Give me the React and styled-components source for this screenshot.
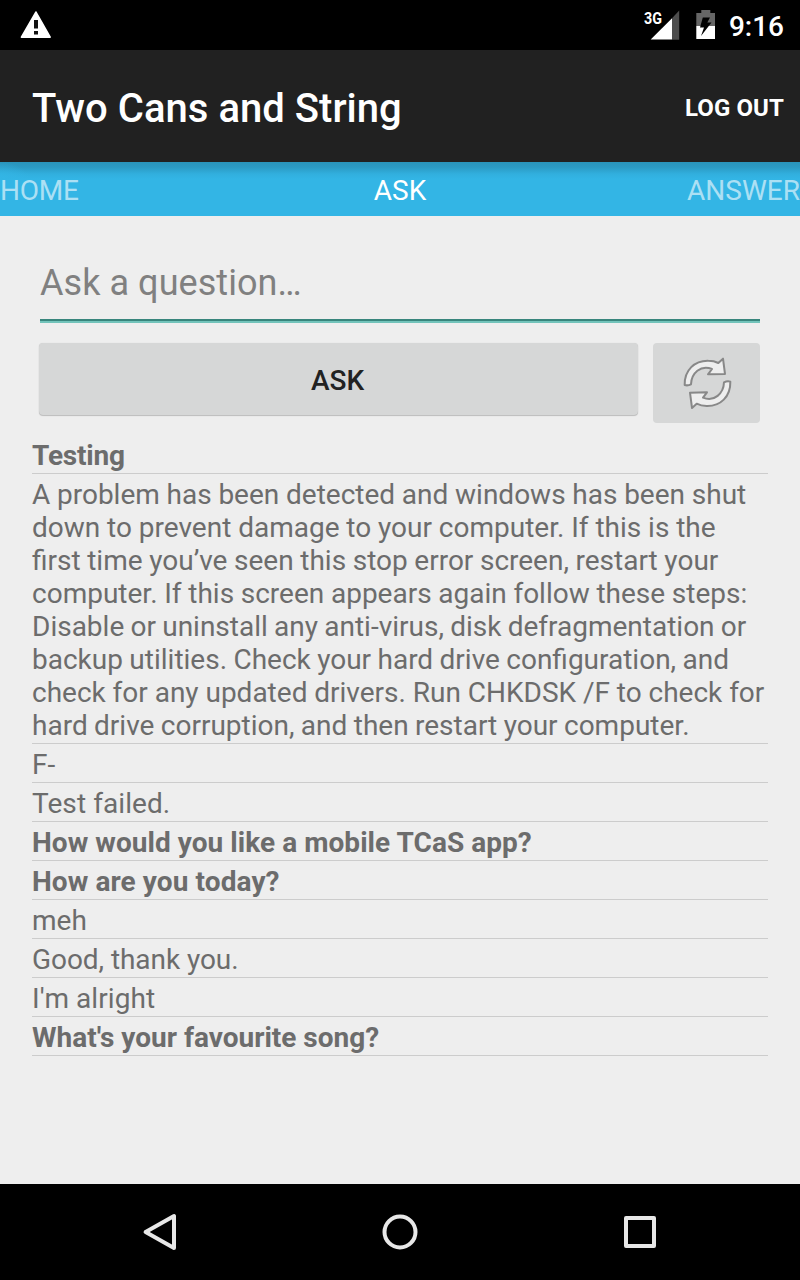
import React from 'react';
import styled, { createGlobalStyle } from 'styled-components';

const Global = createGlobalStyle`
  body { margin: 0; background: #eee; font-family: Roboto, sans-serif; }
  * { box-sizing: border-box; }
  svg { display: block; }
`;
const Screen = styled.div`width: 800px; height: 1280px; display: flex; flex-direction: column; background: #eee;`;
const StatusBar = styled.div`height: 50px; background: #000; display: flex; align-items: center; justify-content: space-between; padding: 0 16px 0 20px;`;
const Right = styled.div`display: flex; align-items: center;`;
const Clock = styled.span`color: #fff; font-size: 28px; font-weight: 500; line-height: 48px; margin-left: 13px; padding-top: 4px;`;
const AppBar = styled.header`height: 112px; background: #212121; color: #fff; display: flex; align-items: center; justify-content: space-between; padding: 4px 16px 0 32px;`;
const Title = styled.h1`margin: 0; font-size: 40px; font-weight: 500; white-space: nowrap; letter-spacing: 0.03px;`;
const LogOut = styled.button`border: 0; background: none; padding: 0; margin-top: -1px; color: #fff; font: 700 24px Roboto, sans-serif; letter-spacing: 0.1px;`;
const Tabs = styled.nav`
  height: 54px; display: grid; grid-template-columns: 1fr auto 1fr; align-items: center; padding-top: 2px;
  background:
    radial-gradient(ellipse 30px 18px at 0 100%, #33b5e5 0%, #33b5e500 100%) 0 0 / 30px 18px no-repeat,
    linear-gradient(#2a94bb 0, #2b9ac3 5px, #31afde 12px, #33b5e5 17px);
`;
const Tab = styled.span`font-size: 28px; letter-spacing: -0.25px; color: rgba(255,255,255,.6); &:last-child { text-align: right; letter-spacing: 0.03px; }
  ${p => p.$active && 'color: #fff; letter-spacing: 0;'}`;
const Content = styled.main`flex: 1; padding: 0 32px;`;
const Field = styled.div`margin: 32px 8px 0; height: 75px; border-bottom: 2px solid #72c3ba; box-shadow: inset 0 -2px #38857c; font-size: 36px; line-height: 71px; color: #808080; letter-spacing: 0.06px;`;
const Actions = styled.div`display: flex; gap: 15px; padding: 20px 8px 0 7px; height: 112px;`;
const AskButton = styled.button`border: 0; padding: 2px 2px 0 0; width: 599px; height: 72px; border-radius: 4px; background: #d6d7d7; box-shadow: 0 1px 1px #0003, 0 0 1px #0002; font: 500 28px Roboto, sans-serif; color: #222;`;
const Refresh = styled.button`border: 0; padding: 0; width: 107px; height: 80px; border-radius: 4px; background: #d6d7d7;`;
const Row = styled.div`
  border-bottom: 1px solid #ccc; padding: 4px 0 1px; font-size: 28px; line-height: 33px; color: #6c6c6c;
  font-weight: ${p => (p.$bold ? 700 : 400)};
`;
const Line = styled.span`display: block; white-space: nowrap; word-spacing: ${p => p.$gap || 0}px; letter-spacing: ${p => (p.$track ? `${p.$track}px` : 'normal')};`;
const NavBar = styled.footer`height: 96px; background: #000; display: flex; justify-content: center; align-items: center; gap: 200px;`;
const NavIcon = styled.svg.attrs({ width: 40, height: 40, viewBox: '0 0 40 40', fill: 'none', stroke: '#e8e8e8', strokeWidth: 4, strokeLinejoin: 'round' })``;
const Network = styled.svg``;
const Battery = styled.svg`margin-left: 16px;`;

const rows = [
  { bold: true, lines: [{ text: 'Testing', track: -0.2 }] },
  {
    lines: [
      { text: 'A problem has been detected and windows has been shut', gap: -0.22 },
      { text: 'down to prevent damage to your computer. If this is the', gap: -0.1 },
      { text: 'first time you’ve seen this stop error screen, restart your', gap: -0.35 },
      { text: 'computer. If this screen appears again follow these steps:', gap: -0.27 },
      { text: 'Disable or uninstall any anti-virus, disk defragmentation or', gap: -0.7 },
      { text: 'backup utilities. Check your hard drive configuration, and', gap: -0.55 },
      { text: 'check for any updated drivers. Run CHKDSK /F to check for', gap: -0.1 },
      { text: 'hard drive corruption, and then restart your computer.', gap: -0.55 },
    ],
  },
  { lines: [{ text: 'F-' }] },
  { lines: [{ text: 'Test failed.', track: 0.08 }] },
  { bold: true, lines: [{ text: 'How would you like a mobile TCaS app?', track: 0.05 }] },
  { bold: true, lines: [{ text: 'How are you today?', track: 0.09 }] },
  { lines: [{ text: 'meh' }] },
  { lines: [{ text: 'Good, thank you.', track: -0.06 }] },
  { lines: [{ text: "I'm alright", track: 0.08 }] },
  { bold: true, lines: [{ text: "What's your favourite song?" }] },
];

const arrow = 'M134 165 C133 120 164 91 205 92 Q222 92 235 99 L249 86 L255 132 L204 133 L216 117 C182 103 154 130 153 163 Q143 168 134 165 Z';

export default function App() {
  return (
    <Screen>
      <Global />
      <StatusBar>
        <svg width="32" height="30" viewBox="0 0 32 30">
          <path d="M16 2L30.2 27.2H1.4Z" fill="#fff" stroke="#fff" strokeWidth="1.5" strokeLinejoin="round" />
          <path d="M14 10h4v8.5h-4zM14 21h4v3.5h-4z" fill="#111" />
        </svg>
        <Right>
          <Network width="36" height="50" viewBox="0 0 36 50">
            <path d="M35.2 10.5V39.7H28V18.2Z" fill="#4d4d4d" />
            <path d="M28 18.2V39.5H6.7Z" fill="#fff" />
            <text x="0" y="23.7" fill="#fff" fontFamily="Roboto, sans-serif" fontWeight="700" fontSize="16.5" textLength="18" lengthAdjust="spacingAndGlyphs">3G</text>
          </Network>
          <Battery width="20" height="50" viewBox="0 0 20 50">
            <path d="M.3 13H5.3V10H14.3V13H19V26H.3Z" fill="#666" />
            <path d="M.3 26H19V39H.3Z" fill="#fff" />
            <path d="M6.8 17.5H14L11.3 22.5H15.5L5 36L8 27.5H4Z" fill="#000" />
          </Battery>
          <Clock>9:16</Clock>
        </Right>
      </StatusBar>
      <AppBar><Title>Two Cans and String</Title><LogOut>LOG OUT</LogOut></AppBar>
      <Tabs><Tab>HOME</Tab><Tab $active>ASK</Tab><Tab>ANSWER</Tab></Tabs>
      <Content>
        <Field>Ask a question…</Field>
        <Actions>
          <AskButton>ASK</AskButton>
          <Refresh aria-label="Refresh">
            <svg width="107" height="80" viewBox="39 39 321 240" fill="#eee" stroke="#888" strokeWidth="6" strokeLinejoin="round">
              <path d={arrow} />
              <path d={arrow} transform="rotate(180 202.5 160)" />
            </svg>
          </Refresh>
        </Actions>
        {rows.map(({ bold, lines }) => (
          <Row key={lines[0].text} $bold={bold}>
            {lines.map(({ text, gap, track }) => <Line key={text} $gap={gap} $track={track}>{text}</Line>)}
          </Row>
        ))}
      </Content>
      <NavBar>
        <NavIcon><path d="M5.6 20L34 4V36Z" /></NavIcon>
        <NavIcon><circle cx="20" cy="20" r="15.5" /></NavIcon>
        <NavIcon><rect x="6" y="6" width="28" height="28" /></NavIcon>
      </NavBar>
    </Screen>
  );
}
